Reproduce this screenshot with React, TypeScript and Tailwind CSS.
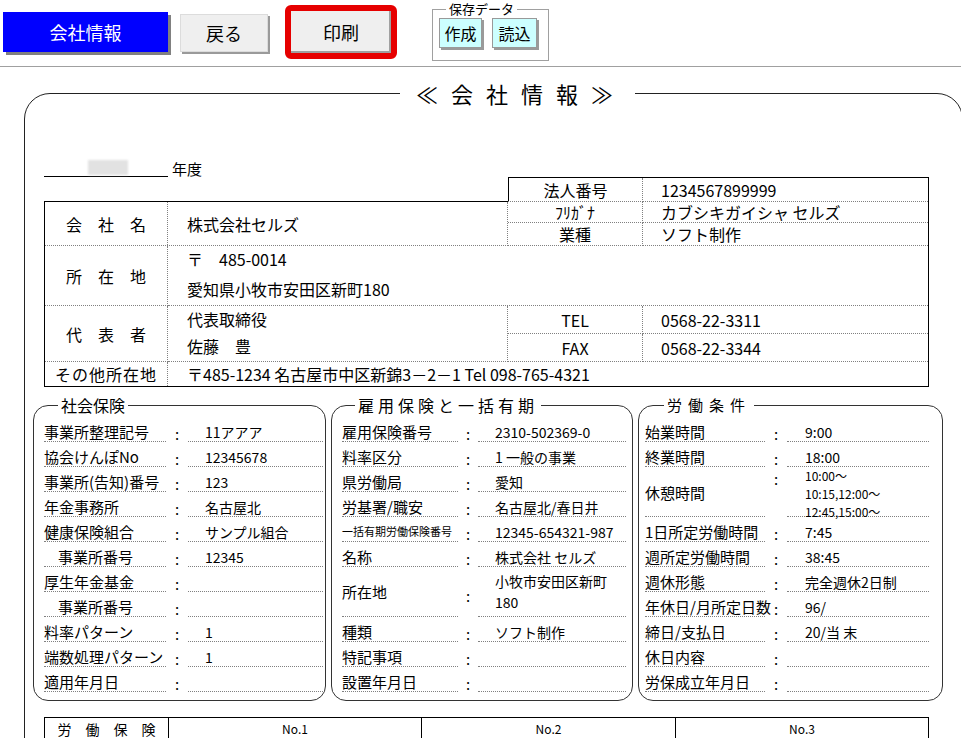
import React from 'react';

type PanelRow = {
  label: string;
  value?: string;
  lines?: string[];
  tall?: 'center' | 'top';
  labelClass?: string;
};

type PanelProps = {
  title: string;
  legendClass: string;
  boxClass: string;
  labelW: string;
  colonW: string;
  valueW: string;
  valueText: string;
  rows: PanelRow[];
};

const socialRows: PanelRow[] = [
  { label: '事業所整理記号', value: '11アアア' },
  { label: '協会けんぽNo', value: '12345678' },
  { label: '事業所(告知)番号', value: '123' },
  { label: '年金事務所', value: '名古屋北' },
  { label: '健康保険組合', value: 'サンプル組合' },
  { label: '事業所番号', value: '12345', labelClass: 'pl-[14px] text-[15px]' },
  { label: '厚生年金基金' },
  { label: '事業所番号', labelClass: 'pl-[14px] text-[15px]' },
  { label: '料率パターン', value: '1' },
  { label: '端数処理パターン', value: '1' },
  { label: '適用年月日' },
];

const employRows: PanelRow[] = [
  { label: '雇用保険番号', value: '2310-502369-0' },
  { label: '料率区分', value: '1 一般の事業' },
  { label: '県労働局', value: '愛知' },
  { label: '労基署/職安', value: '名古屋北/春日井' },
  { label: '一括有期労働保険番号', value: '12345-654321-987', labelClass: 'pb-[1px] text-[11px]' },
  { label: '名称', value: '株式会社 セルズ' },
  { label: '所在地', lines: ['小牧市安田区新町', '180'], tall: 'center' },
  { label: '種類', value: 'ソフト制作' },
  { label: '特記事項' },
  { label: '設置年月日' },
];

const workRows: PanelRow[] = [
  { label: '始業時間', value: '9:00' },
  { label: '終業時間', value: '18:00' },
  { label: '休憩時間', lines: ['10:00～', '10:15,12:00～', '12:45,15:00～'], tall: 'top' },
  { label: '1日所定労働時間', value: '7:45' },
  { label: '週所定労働時間', value: '38:45' },
  { label: '週休形態', value: '完全週休2日制' },
  { label: '年休日/月所定日数', value: '96/' },
  { label: '締日/支払日', value: '20/当 末' },
  { label: '休日内容' },
  { label: '労保成立年月日' },
];

function Panel({ title, legendClass, boxClass, labelW, colonW, valueW, valueText, rows }: PanelProps) {
  return (
    <fieldset className={`rounded-[15px] border border-[#333] pt-[3px] pb-[8px] ${boxClass}`}>
      <legend className={`px-[3px] leading-[18px] ${legendClass}`}>{title}</legend>
      {rows.map((r, i) => {
        if (r.tall === 'center') {
          return (
            <div key={i} className="flex h-[50px]">
              <div className={`${labelW} flex shrink-0 items-center border-b border-dotted border-[#808080] text-[15px] leading-[17px]`}>{r.label}</div>
              <div className={`${colonW} flex shrink-0 items-center justify-center pt-[8px] text-[15px]`}>:</div>
              <div className={`${valueW} flex shrink-0 flex-col justify-start border-b border-dotted border-[#808080] pt-[4px] text-[14px] leading-[21px]`}>
                {r.lines!.map((l) => (
                  <div key={l}>{l}</div>
                ))}
              </div>
            </div>
          );
        }
        if (r.tall === 'top') {
          return (
            <div key={i} className="flex h-[50px]">
              <div className={`${labelW} flex shrink-0 items-center border-b border-dotted border-[#808080] pt-[2px] text-[15px] leading-[17px]`}>{r.label}</div>
              <div className={`${colonW} flex shrink-0 items-start justify-center pt-[3px] text-[15px] leading-[17px]`}>:</div>
              <div className={`${valueW} h-[50px] shrink-0 border-b border-dotted border-[#808080] text-[12px] leading-[18px] whitespace-nowrap`}>
                {r.lines!.map((l) => (
                  <div key={l}>{l}</div>
                ))}
              </div>
            </div>
          );
        }
        return (
          <div key={i} className="flex h-[25px]">
            <div className={`${labelW} flex shrink-0 items-end border-b border-dotted border-[#808080] leading-[18px] whitespace-nowrap ${r.labelClass ?? 'text-[15px]'}`}>{r.label}</div>
            <div className={`${colonW} flex shrink-0 items-end justify-center text-[15px] leading-[17px]`}>:</div>
            <div className={`${valueW} flex shrink-0 items-end border-b border-dotted border-[#808080] ${valueText} leading-[18px] whitespace-nowrap`}>{r.value ?? ''}</div>
          </div>
        );
      })}
    </fieldset>
  );
}

const dot = 'border-dotted border-[#808080]';

export default function App() {
  return (
    <div className="h-[738px] w-[961px] overflow-hidden bg-white font-['Noto_Sans_CJK_JP',sans-serif] text-black">
      {/* Toolbar */}
      <div className="flex h-[67px] items-start border-b border-[#a0a0a0]">
        <div className="ml-[3px] mt-[12px] flex h-[40px] w-[165px] items-center justify-center bg-[#0000ff] text-[18px] text-white shadow-[3px_3px_0_#808080]">
          会社情報
        </div>
        <button className="ml-[12px] mt-[14px] flex h-[38px] w-[88px] items-center justify-center border border-[#dcdcdc] bg-[#efefef] text-[18px] shadow-[2px_2px_0_#9a9a9a]">
          戻る
        </button>
        <div className="ml-[17px] mt-[5px] h-[54px] w-[112px] rounded-[6px] border-[6px] border-[#e60000]">
          <button className="flex h-full w-full items-center justify-center bg-[#efefef] text-[18px] shadow-[inset_-2px_-2px_0_#a0a0a0]">
            印刷
          </button>
        </div>
        <fieldset className="ml-[35px] mt-[2px] w-[117px] border border-[#a0a0a0] px-[6px] pb-[12px]">
          <legend className="ml-[7px] px-[3px] text-[13px] leading-[14px]">保存データ</legend>
          <div className="mt-[2px] flex gap-[10px]">
            <button className="h-[30px] w-[43px] border border-[#999] bg-[#ccffff] text-[16px] leading-[28px] shadow-[2px_2px_0_#9a9a9a]">作成</button>
            <button className="h-[30px] w-[45px] border border-[#999] bg-[#ccffff] text-[16px] leading-[28px] shadow-[2px_2px_0_#9a9a9a]">読込</button>
          </div>
        </fieldset>
      </div>

      {/* Card */}
      <fieldset className="ml-[24px] mt-[12px] w-[925px] rounded-[26px] border border-[#222] px-[19px] pt-[52px] pb-[20px]">
        <legend className="ml-[356px] pl-[16px] pr-[9px] text-[22px] leading-[28px] tracking-[13px]">≪会社情報≫</legend>

        {/* year + 法人番号 */}
        <div className="flex items-end">
          <div className="mb-[24px] flex w-[464px] items-end">
            <div className="flex h-[18px] w-[124px] items-start border-b border-black">
              <div className="ml-[44px] mt-[1px] h-[15px] w-[40px] bg-[#e2e2e2] blur-[1px]" />
            </div>
            <span className="ml-[4px] text-[15px] leading-[17px]">年度</span>
          </div>
          <div className="grid h-[24px] w-[421px] grid-cols-[134px_285px] border-t border-l border-r border-black text-[16px]">
            <div className={`flex items-center justify-center border-r ${dot}`}>法人番号</div>
            <div className="flex items-center pl-[18px]">1234567899999</div>
          </div>
        </div>

        {/* company table */}
        <div className="grid w-[885px] grid-cols-[123px_340px_135px_285px] grid-rows-[22px_23px_30px_30px_28px_28px_24px] border-l border-r border-b border-black text-[16px] leading-[20px]">
          <div className="col-span-2 col-start-1 row-span-2 row-start-1 border-t border-black">
            <div className={`flex h-full border-r border-b ${dot}`}>
              <div className={`flex w-[123px] shrink-0 items-center justify-center border-r ${dot}`}>会　社　名</div>
              <div className="flex items-center pl-[19px]">株式会社セルズ</div>
            </div>
          </div>
          <div className={`col-start-3 row-start-1 flex items-center justify-center border-t border-r border-b ${dot}`}>ﾌﾘｶﾞﾅ</div>
          <div className={`col-start-4 row-start-1 flex items-center border-t border-b ${dot} pl-[18px]`}>カブシキガイシャ セルズ</div>
          <div className={`col-start-3 row-start-2 flex items-center justify-center border-r border-b ${dot}`}>業種</div>
          <div className={`col-start-4 row-start-2 flex items-center border-b ${dot} pl-[18px]`}>ソフト制作</div>

          <div className={`col-start-1 row-span-2 row-start-3 flex items-center justify-center border-r border-b ${dot}`}>所　在　地</div>
          <div className={`col-span-3 col-start-2 row-span-2 row-start-3 border-b ${dot} pl-[19px]`}>
            <div className="leading-[26px]">〒　485-0014</div>
            <div className="mt-[4px] leading-[26px]">愛知県小牧市安田区新町180</div>
          </div>

          <div className={`col-start-1 row-span-2 row-start-5 flex items-center justify-center border-r border-b ${dot}`}>代　表　者</div>
          <div className={`col-start-2 row-span-2 row-start-5 border-r border-b ${dot} pl-[19px]`}>
            <div className="leading-[27px]">代表取締役</div>
            <div className="leading-[27px]">佐藤　豊</div>
          </div>
          <div className={`col-start-3 row-start-5 flex items-center justify-center border-r border-b ${dot}`}>TEL</div>
          <div className={`col-start-4 row-start-5 flex items-center border-b ${dot} pl-[18px]`}>0568-22-3311</div>
          <div className={`col-start-3 row-start-6 flex items-center justify-center border-r border-b ${dot}`}>FAX</div>
          <div className={`col-start-4 row-start-6 flex items-center border-b ${dot} pl-[18px]`}>0568-22-3344</div>

          <div className={`col-start-1 row-start-7 flex items-center justify-center border-r ${dot} tracking-[1px]`}>その他所在地</div>
          <div className="col-span-3 col-start-2 row-start-7 flex items-center pl-[19px]">〒485-1234 名古屋市中区新錦3－2－1 Tel 098-765-4321</div>
        </div>

        {/* panels */}
        <div className="mt-[9px] -ml-[11px] flex w-[910px] gap-[5px]">
          <Panel
            title="社会保険"
            legendClass="ml-[14px] text-[16px]"
            boxClass="w-[293px] pl-[10px] pr-[2px]"
            labelW="w-[122px]"
            colonW="w-[22px]"
            valueW="w-[135px] pl-[17px]"
            valueText="text-[14px]"
            rows={socialRows}
          />
          <Panel
            title="雇用保険と一括有期"
            legendClass="ml-[13px] tracking-[4px] text-[16px]"
            boxClass="w-[302px] pl-[10px] pr-[6px]"
            labelW="w-[116px]"
            colonW="w-[20px]"
            valueW="w-[148px] pl-[17px]"
            valueText="text-[14px]"
            rows={employRows}
          />
          <Panel
            title="労働条件"
            legendClass="ml-[19px] tracking-[6px] text-[15px]"
            boxClass="w-[305px] pl-[6px] pr-[13px]"
            labelW="w-[120px]"
            colonW="w-[22px]"
            valueW="w-[142px] pl-[18px]"
            valueText="text-[14px]"
            rows={workRows}
          />
        </div>

        {/* 労働保険 */}
        <div className="mt-[16px] grid h-[32px] w-[885px] grid-cols-[124px_253px_254px_252px] border border-black">
          <div className="flex items-start justify-center border-r border-black pt-[3px] text-[14px] leading-[16px]">労　働　保　険</div>
          <div className="flex items-start justify-center border-r border-black pt-[3px] text-[12px] leading-[16px]">No.1</div>
          <div className="flex items-start justify-center border-r border-black pt-[3px] text-[12px] leading-[16px]">No.2</div>
          <div className="flex items-start justify-center pt-[3px] text-[12px] leading-[16px]">No.3</div>
        </div>
      </fieldset>
    </div>
  );
}
